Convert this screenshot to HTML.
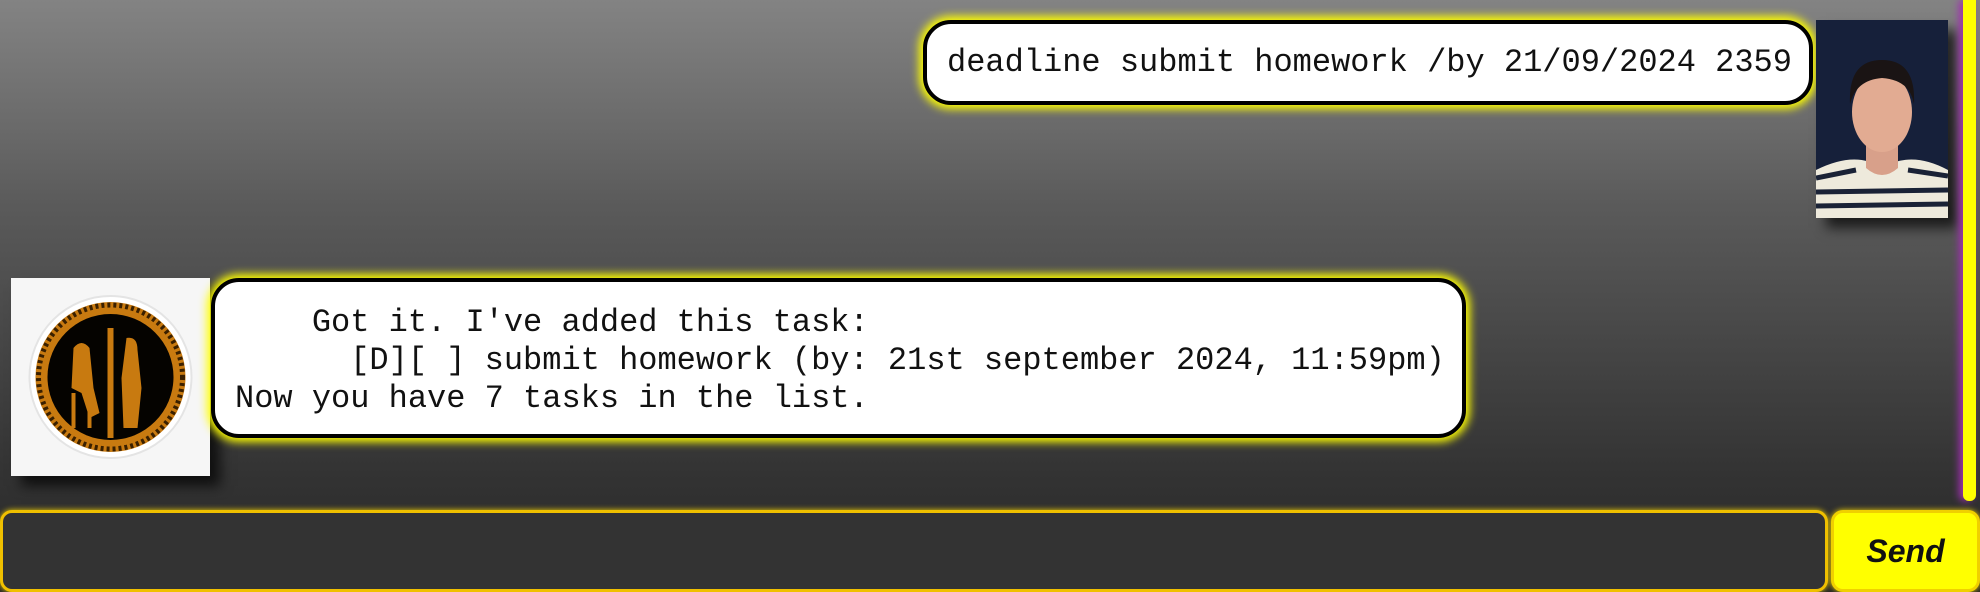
<!DOCTYPE html>
<html><head><meta charset="utf-8"><style>
*{margin:0;padding:0;box-sizing:border-box}
body{width:1980px;height:592px;overflow:hidden;position:relative;background:linear-gradient(#838383 0%,#5a5a5a 35%,#333 80%,#262626 100%);font-family:"Liberation Mono",monospace}
.bubble{position:absolute;background:#fff;border:4px solid #000;border-radius:28px;box-shadow:0 0 9px 4px #ffff00;font-size:32px;color:#111;white-space:pre;line-height:38px}
#u{left:923px;top:20px;width:890px;height:85px;padding:20px 0 0 20px}
#b{left:211px;top:278px;width:1255px;height:160px;padding:22px 0 0 20px}
.img{position:absolute;box-shadow:10px 10px 12px rgba(0,0,0,.7)}
#sb{position:absolute;left:1963px;top:0;width:13px;height:501px;background:#ffff00;border-radius:0 0 6px 6px;box-shadow:-4px 0 8px #a030b0}
#in{position:absolute;left:0;top:510px;width:1828px;height:82px;background:#333;border:3px solid #f0c000;border-radius:12px;box-shadow:0 0 6px #f0d000}
#send{position:absolute;left:1831px;top:510px;width:149px;height:82px;background:#ffff00;border:3px solid #f0d000;border-radius:12px;font:italic bold 32px "Liberation Sans",sans-serif;color:#111;text-align:center;line-height:76px;box-shadow:0 0 6px #f0d000}
</style></head><body>
<div id="u" class="bubble">deadline submit homework /by 21/09/2024 2359</div>
<div class="img" style="left:1816px;top:20px;width:132px;height:198px;overflow:hidden">
<svg width="132" height="198" viewBox="0 0 132 198"><rect width="132" height="198" fill="#16203a"/>
<path d="M0 150 Q40 130 66 148 Q95 130 132 150 V198 H0Z" fill="#eeeadc"/>
<g stroke="#1a2236" stroke-width="5"><path d="M0 158 L40 150M0 172 L132 170M0 186 L132 184M92 150 L132 156"/></g>
<path d="M50 115 L50 148 Q66 162 82 148 L82 115Z" fill="#d8a08a"/>
<ellipse cx="66" cy="92" rx="30" ry="40" fill="#e2ab92"/>
<path d="M34 84 Q32 40 66 40 Q100 40 98 84 Q94 60 66 58 Q40 60 34 84Z" fill="#1a1414"/>
</svg></div>
<div class="img" style="left:11px;top:278px;width:199px;height:198px;background:#f6f6f6">
<svg width="199" height="198" viewBox="0 0 198 198"><circle cx="99" cy="99" r="81" fill="#fff" stroke="#e4e4e4" stroke-width="2"/>
<circle cx="99" cy="99" r="75" fill="#c87a10"/><circle cx="99" cy="99" r="72" fill="none" stroke="#3a2000" stroke-width="5" stroke-dasharray="3 3"/>
<circle cx="99" cy="99" r="63" fill="#050300"/>
<rect x="96" y="50" width="6" height="110" fill="#c87a10"/>
<path d="M62 70 Q70 60 78 70 L82 110 L88 135 L78 140 L70 115 L60 110Z" fill="#c87a10"/>
<path d="M115 60 Q126 58 126 72 L130 110 L126 150 L112 150 L110 100Z" fill="#c87a10"/>
<rect x="60" y="115" width="4" height="35" fill="#c87a10"/><rect x="76" y="115" width="4" height="35" fill="#c87a10"/>
</svg></div>
<div id="b" class="bubble">    Got it. I've added this task:
      [D][ ] submit homework (by: 21st september 2024, 11:59pm)
Now you have 7 tasks in the list.</div>
<div id="sb"></div>
<div id="in"></div>
<div id="send">Send</div>
</body></html>
